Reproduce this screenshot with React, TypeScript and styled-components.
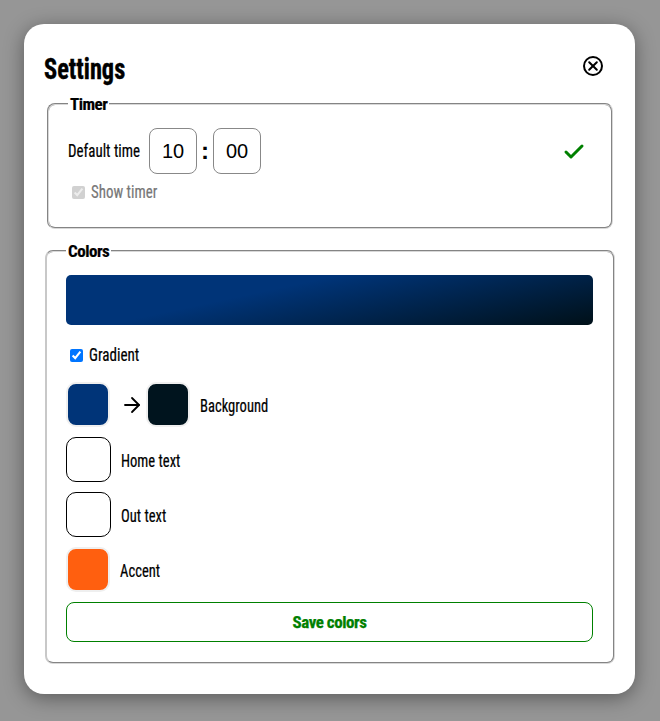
import React from "react";
import styled, { createGlobalStyle } from "styled-components";
import { Check, ArrowRight } from "lucide-react";

const Global = createGlobalStyle`
  html, body { margin: 0; padding: 0; height: 721px; background: #969696; overflow: hidden; }
  body { font-family: "Liberation Sans Narrow", "Roboto Condensed", "Liberation Sans", sans-serif; color: #000; }
  * { box-sizing: border-box; }
`;

const Overlay = styled.div`
  height: 721px;
  padding: 24px;
  background: #969696;
`;

const Modal = styled.div`
  width: 611px;
  height: 670px;
  padding: 20px 20px 20px 21px;
  background: #fff;
  border-radius: 20px;
  box-shadow: 0 4px 20px rgba(0, 0, 0, 0.4);
`;

const Header = styled.div`
  display: flex;
  align-items: center;
  justify-content: space-between;
  height: 48px;
  margin-left: -1px;
  padding-right: 10px;
  margin-bottom: 2px;
`;

const Title = styled.h1`
  margin: 2px 0 0;
  font-size: 29px;
  font-weight: 700;
  line-height: 46px;
  white-space: nowrap;
  transform: scaleX(0.84);
  transform-origin: left center;
  -webkit-text-stroke: 0.4px #000;
`;

const IconButton = styled.button`
  display: flex;
  width: 24px;
  height: 24px;
  padding: 0;
  margin-top: -4px;
  border: 0;
  background: none;
  color: #000;
`;

const Group = styled.fieldset<{ $inset?: boolean }>`
  margin: 0 ${(p) => (p.$inset ? "2px" : "0")};
  padding: 0 20px 0 19px;
  border: 2px groove #d8d8d8;
  border-radius: 8px;
  min-width: 0;
`;

const Legend = styled.legend`
  padding: 0 2px;
  font-size: 17px;
  font-weight: 700;
  line-height: 20px;
  letter-spacing: -0.5px;
  -webkit-text-stroke: 0.2px #000;
`;

const TimerGroup = styled(Group)`
  height: 135px;
  margin-bottom: 12px;
`;

const ColorGroup = styled(Group)`
  height: 423px;
  border-left: 2px solid #c8c8c8;
`;

const Narrow = styled.span<{ $scale?: number }>`
  display: inline-block;
  white-space: nowrap;
  font-size: 18px;
  line-height: 20px;
  transform: scaleX(${(p) => p.$scale ?? 0.81});
  transform-origin: left center;
  -webkit-text-stroke: 0.2px currentColor;
`;

const TimeRow = styled.div`
  display: flex;
  align-items: center;
  height: 46px;
  margin-top: 14px;
`;

const TimeLabel = styled.span`
  width: 81px;
  flex: none;
`;

const TimeInput = styled.div`
  display: flex;
  align-items: center;
  justify-content: center;
  width: 48px;
  height: 46px;
  border: 1px solid #888;
  border-radius: 8px;
  font-family: "Liberation Sans", sans-serif;
  font-size: 20px;
`;

const Colon = styled.span`
  width: 16px;
  text-align: center;
  font-family: "Liberation Sans", sans-serif;
  font-size: 24px;
  font-weight: 700;
`;

const Saved = styled.span`
  display: flex;
  margin: 1px 5px 0 auto;
  color: #008000;
`;

const CheckLabel = styled.label<{ $disabled?: boolean }>`
  display: flex;
  align-items: center;
  gap: 6px;
  line-height: 20px;
  color: ${(p) => (p.$disabled ? "#777" : "#000")};
`;

const ShowTimer = styled(CheckLabel)`
  margin-top: 8px;
  margin-left: 4px;
`;

const GradientCheck = styled(CheckLabel)`
  margin: 20px 0 17px 4px;
`;

const Box = styled.input`
  width: 13px;
  height: 13px;
  margin: 0;
  flex: none;
`;

const Preview = styled.div`
  height: 50px;
  margin-top: 14px;
  border-radius: 5px;
  background: linear-gradient(168deg, #003478 36%, #001018 100%);
`;

const SwatchRow = styled.div`
  display: flex;
  align-items: center;
  height: 45px;
  margin-bottom: 10px;
`;

const Swatch = styled.div<{ $color: string; $outlined?: boolean }>`
  flex: none;
  width: ${(p) => (p.$outlined ? "45px" : "44px")};
  height: 45px;
  border-radius: 10px;
  background: ${(p) => p.$color};
  border: ${(p) => (p.$outlined ? "1px solid #000" : "2px solid #efefef")};
`;

const Arrow = styled.span`
  display: flex;
  flex: none;
  width: 36px;
  padding-left: 8px;
  justify-content: center;
`;

const RowLabel = styled.span`
  margin-left: 10px;
  padding-top: 2px;
`;

const SaveButton = styled.button`
  display: block;
  width: 100%;
  height: 40px;
  margin-top: 0;
  border: 1px solid #008000;
  border-radius: 8px;
  background: #fff;
  color: #008000;
  font-family: inherit;
  font-size: 17px;
  font-weight: 700;
  letter-spacing: -0.45px;
  -webkit-text-stroke: 0.25px #008000;
`;

function CloseIcon() {
  return (
    <svg width="24" height="24" viewBox="0 0 24 24" fill="none" stroke="currentColor" strokeWidth="2" strokeLinecap="round">
      <circle cx="12" cy="12" r="9" />
      <path d="M8.2 8.2l7.6 7.6M15.8 8.2l-7.6 7.6" />
    </svg>
  );
}

export default function App() {
  return (
    <Overlay>
      <Global />
      <Modal>
        <Header>
          <Title>Settings</Title>
          <IconButton aria-label="Close">
            <CloseIcon />
          </IconButton>
        </Header>
        <TimerGroup $inset>
          <Legend>Timer</Legend>
          <TimeRow>
            <TimeLabel>
              <Narrow $scale={0.83}>Default time</Narrow>
            </TimeLabel>
            <TimeInput>10</TimeInput>
            <Colon>:</Colon>
            <TimeInput>00</TimeInput>
            <Saved>
              <Check size={24} strokeWidth={3} />
            </Saved>
          </TimeRow>
          <ShowTimer $disabled>
            <Box type="checkbox" checked disabled readOnly />
            <Narrow $scale={0.83}>Show timer</Narrow>
          </ShowTimer>
        </TimerGroup>
        <ColorGroup>
          <Legend>Colors</Legend>
          <Preview />
          <GradientCheck>
            <Box type="checkbox" checked readOnly />
            <Narrow $scale={0.84}>Gradient</Narrow>
          </GradientCheck>
          <SwatchRow>
            <Swatch $color="#003478" />
            <Arrow>
              <ArrowRight size={24} strokeWidth={1.8} />
            </Arrow>
            <Swatch $color="#00141e" />
            <RowLabel>
              <Narrow>Background</Narrow>
            </RowLabel>
          </SwatchRow>
          <SwatchRow>
            <Swatch $color="#ffffff" $outlined />
            <RowLabel>
              <Narrow>Home text</Narrow>
            </RowLabel>
          </SwatchRow>
          <SwatchRow>
            <Swatch $color="#ffffff" $outlined />
            <RowLabel>
              <Narrow>Out text</Narrow>
            </RowLabel>
          </SwatchRow>
          <SwatchRow>
            <Swatch $color="#ff5f0f" />
            <RowLabel>
              <Narrow>Accent</Narrow>
            </RowLabel>
          </SwatchRow>
          <SaveButton>Save colors</SaveButton>
        </ColorGroup>
      </Modal>
    </Overlay>
  );
}
